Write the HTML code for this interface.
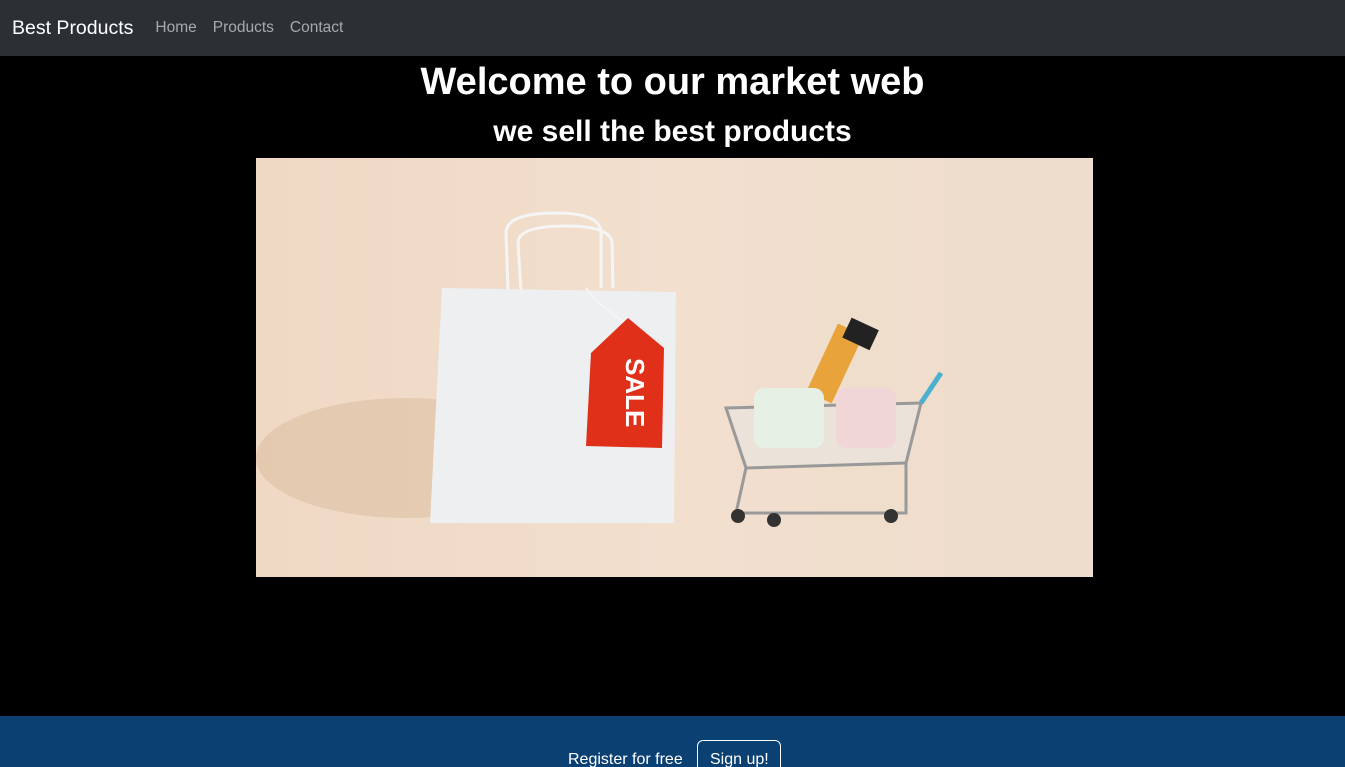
<!DOCTYPE html>
<html><head><meta charset="utf-8"><style>
*{margin:0;padding:0;box-sizing:border-box}
html,body{width:1345px;height:767px;overflow:hidden}
body{background:#000;font-family:"Liberation Sans",sans-serif;position:relative}
nav{height:56px;background:#2b3035;display:flex;align-items:center;padding-left:12px}
.brand{color:#fff;font-size:19.5px;margin-right:22px}
nav a{color:#a7a9ab;font-size:15.5px;margin-right:16px;text-decoration:none}
h1{color:#fff;text-align:center;font-size:38px;font-weight:bold;position:absolute;top:61px;width:100%}
h2{color:#fff;text-align:center;font-size:30px;font-weight:bold;position:absolute;top:115px;width:100%}
.img{position:absolute;left:256px;top:158px;width:837px;height:419px;background:linear-gradient(90deg,#efd8c4 0%,#f2dfce 50%,#eedccc 100%);overflow:hidden}
footer{position:absolute;top:716px;left:0;width:100%;height:51px;background:#0b4072;color:#fff;font-size:16px;overflow:hidden}
.reg{position:absolute;left:568px;top:35px;white-space:nowrap}
.btn{position:absolute;left:697px;top:24px;width:84px;height:40px;border:1px solid #fff;border-radius:6px;padding:10px 12px;white-space:nowrap}
</style></head><body>
<nav><span class="brand">Best Products</span><a>Home</a><a>Products</a><a>Contact</a></nav>
<h1>Welcome to our market web</h1>
<h2>we sell the best products</h2>
<div class="img">
<svg width="837" height="419" viewBox="0 0 837 419">
<ellipse cx="150" cy="300" rx="150" ry="60" fill="#dcbfa2" opacity=".6"/>
<path d="M252 132 L250 75 Q250 55 300 55 Q345 55 345 75 L345 130" stroke="#f5f5f5" stroke-width="3" fill="none"/>
<path d="M265 132 L262 85 Q262 68 310 68 Q355 68 356 85 L357 130" stroke="#f5f5f5" stroke-width="3" fill="none"/>
<polygon points="186,130 420,134 418,365 174,365" fill="#eeeff0"/>
<path d="M330 130 Q345 150 370 165" stroke="#f5f5f5" stroke-width="2" fill="none"/>
<polygon points="335,195 372,160 408,190 406,290 330,288" fill="#e0301a"/>
<text x="370" y="200" fill="#fff" font-size="26" font-weight="bold" transform="rotate(90 370 200)">SALE</text>
<rect x="565" y="168" width="28" height="75" fill="#e8a43a" transform="rotate(25 579 205)"/>
<rect x="590" y="165" width="30" height="22" fill="#222" transform="rotate(25 605 175)"/>
<path d="M470 250 L665 245 L650 305 L490 310 Z" stroke="#999" stroke-width="3" fill="rgba(230,230,230,.5)"/>
<rect x="498" y="230" width="70" height="60" rx="10" fill="#e6f0e4"/>
<rect x="580" y="230" width="60" height="60" rx="10" fill="#f0d6d6"/>
<path d="M490 310 L480 355 L650 355 L650 305" stroke="#999" stroke-width="3" fill="none"/>
<circle cx="482" cy="358" r="7" fill="#333"/><circle cx="518" cy="362" r="7" fill="#333"/><circle cx="635" cy="358" r="7" fill="#333"/>
<path d="M665 245 L685 215" stroke="#4bb0d0" stroke-width="5"/>
</svg>
</div>
<footer><span class="reg">Register for free</span><span class="btn">Sign up!</span></footer>
</body></html>
